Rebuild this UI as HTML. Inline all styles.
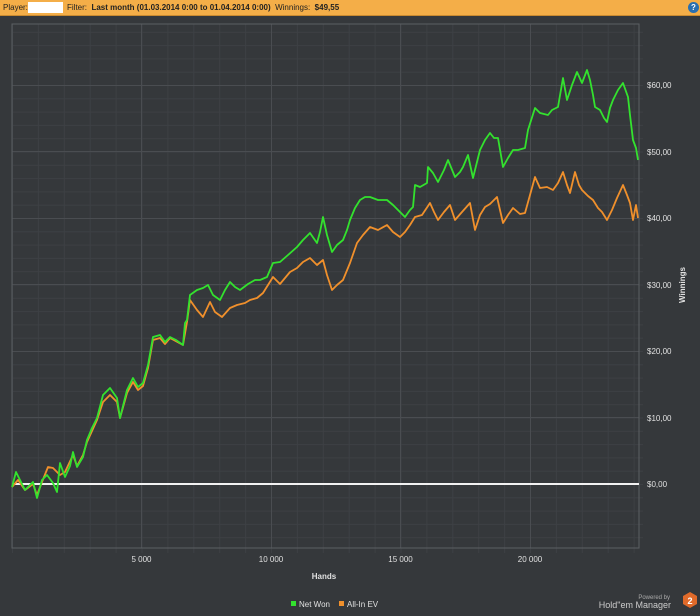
<!DOCTYPE html>
<html><head><meta charset="utf-8">
<style>
html,body{margin:0;padding:0;background:#35383b;width:700px;height:616px;overflow:hidden;font-family:"Liberation Sans",sans-serif;}
.hdr{position:absolute;left:0;top:0;width:700px;height:15px;background:#f4ae48;border-bottom:1px solid #c98a30;font-size:8px;line-height:15px;color:#222;}
.hdr span{position:absolute;top:0}
</style></head><body>
<div class="hdr">
<span style="left:3px">Player:</span>
<span style="left:28px;top:2px;width:35px;height:11px;background:#fff"></span>
<span style="left:67px">Filter:&nbsp; <b style="font-weight:bold;color:#222">Last month (01.03.2014 0:00 to 01.04.2014 0:00)</b>&nbsp; Winnings:&nbsp; <b style="color:#222">$49,55</b></span>
<span style="left:688px;top:2px;width:11px;height:11px;border-radius:50%;background:#2a6fb0;color:#fff;font-size:8px;line-height:11px;text-align:center;font-weight:bold">?</span>
</div>
<svg width="700" height="616" style="position:absolute;left:0;top:0" xmlns="http://www.w3.org/2000/svg" shape-rendering="crispEdges">
<defs>
<pattern id="gh" patternUnits="userSpaceOnUse" x="0" y="484" width="700" height="13.3"><rect x="0" y="0" width="700" height="1" fill="#3d4044"/></pattern>
<pattern id="gv" patternUnits="userSpaceOnUse" x="12" y="0" width="25.9" height="616"><rect x="0" y="0" width="1" height="616" fill="#3d4044"/></pattern>
</defs>
<rect x="12" y="24" width="627" height="524" fill="url(#gh)"/>
<rect x="12" y="24" width="631" height="529" fill="url(#gv)"/>
<rect x="639" y="24" width="4" height="524" fill="url(#gh)"/>
<g fill="#4a4d51">
<rect x="12" y="417" width="627" height="1"/><rect x="12" y="351" width="627" height="1"/><rect x="12" y="284" width="627" height="1"/><rect x="12" y="218" width="627" height="1"/><rect x="12" y="151" width="627" height="1"/><rect x="12" y="85" width="627" height="1"/>
<rect x="141" y="24" width="1" height="524"/><rect x="271" y="24" width="1" height="524"/><rect x="400" y="24" width="1" height="524"/><rect x="530" y="24" width="1" height="524"/>
</g>
<rect x="12" y="24" width="627" height="524" fill="none" stroke="#5c5f63"/>
<rect x="12" y="483" width="627" height="2" fill="#f2f2f2"/>
<g shape-rendering="auto">
<polyline fill="none" stroke="#f0902c" stroke-width="1.8" stroke-linejoin="round" points="12,487 18,480 25,490 33,484 37,495 42,482 48,467 53,468 60,475 65,472 73,455 77,466 83,455 87,442 97,420 103,402 110,395 117,402 120,418 127,393 133,382 138,390 143,386 148,368 153,340 160,338 165,344 170,338 183,345 187,322 190,300 197,310 203,317 210,302 215,312 222,317 230,308 237,305 245,303 250,300 257,298 263,293 273,277 280,284 290,272 297,268 303,262 310,258 317,265 323,260 327,275 332,290 337,285 343,280 350,263 357,243 363,235 370,227 378,230 387,225 393,232 400,237 405,232 410,225 415,217 422,215 430,203 434,212 438,220 444,212 450,205 455,220 462,212 470,203 475,230 480,215 485,207 490,204 497,197 503,223 508,215 513,208 520,214 525,213 530,195 535,177 540,188 547,187 553,190 558,183 563,172 567,185 570,193 575,172 579,185 582,190 588,196 593,200 598,208 602,212 607,220 612,210 617,198 623,185 627,195 630,203 633,220 636,205 638,218"/>
<polyline fill="none" stroke="#33e22e" stroke-width="1.8" stroke-linejoin="round" points="12,487 16,472 20,480 25,490 30,485 33,482 37,498 42,480 47,475 53,483 57,492 60,463 65,477 70,466 73,452 77,467 83,457 87,440 92,428 97,418 103,395 110,388 117,398 120,418 127,390 133,378 138,387 143,383 148,365 153,337 160,335 165,342 170,337 176,340 183,345 185,323 187,320 190,295 197,290 203,288 208,285 213,295 220,300 225,290 230,282 235,287 240,290 248,284 255,280 260,280 267,277 273,263 280,262 288,255 297,247 303,240 310,233 317,243 320,232 323,217 327,235 332,252 337,245 343,240 347,230 350,220 355,208 360,200 365,197 370,197 378,200 387,200 393,205 400,212 405,217 410,210 413,207 415,185 420,187 427,183 428,167 433,173 438,182 444,170 448,160 455,177 460,172 463,167 468,155 473,178 477,162 480,150 485,140 490,133 494,138 498,138 503,167 508,158 513,150 518,150 525,148 528,130 535,108 540,113 548,115 552,110 558,107 563,78 567,100 572,85 577,72 582,83 587,70 590,80 593,95 595,107 600,110 604,118 607,122 610,108 613,100 618,90 623,83 628,97 630,115 633,140 636,148 638,160"/>
<g font-family="Liberation Sans, sans-serif" font-size="8" fill="#e0e0e0">
<text x="647" y="88">$60,00</text><text x="647" y="155">$50,00</text><text x="647" y="221">$40,00</text><text x="647" y="288">$30,00</text><text x="647" y="354">$20,00</text><text x="647" y="421">$10,00</text><text x="647" y="487">$0,00</text>
<text x="141.5" y="562" text-anchor="middle">5 000</text><text x="271" y="562" text-anchor="middle">10 000</text><text x="400.5" y="562" text-anchor="middle">15 000</text><text x="530" y="562" text-anchor="middle">20 000</text>
<text x="324" y="579" text-anchor="middle" font-weight="bold">Hands</text>
<text transform="translate(685,285) rotate(-90)" text-anchor="middle" font-weight="bold">Winnings</text>
<rect x="291" y="601" width="5" height="5" fill="#33e22e"/><text x="299" y="607">Net Won</text>
<rect x="339" y="601" width="5" height="5" fill="#f0902c"/><text x="347" y="607">All-In EV</text>
<text x="670" y="599" text-anchor="end" font-size="6" fill="#aaa">Powered by</text>
<text x="671" y="608" text-anchor="end" font-size="9" fill="#ccc">Hold"em Manager</text>
</g>
<polygon points="683,596 690,592 697,596 697,604 690,608 683,604" fill="#e06a2a"/>
<text x="690" y="604" text-anchor="middle" font-family="Liberation Sans, sans-serif" font-size="9" font-weight="bold" fill="#fff">2</text>
</g>
</svg>
</body></html>
